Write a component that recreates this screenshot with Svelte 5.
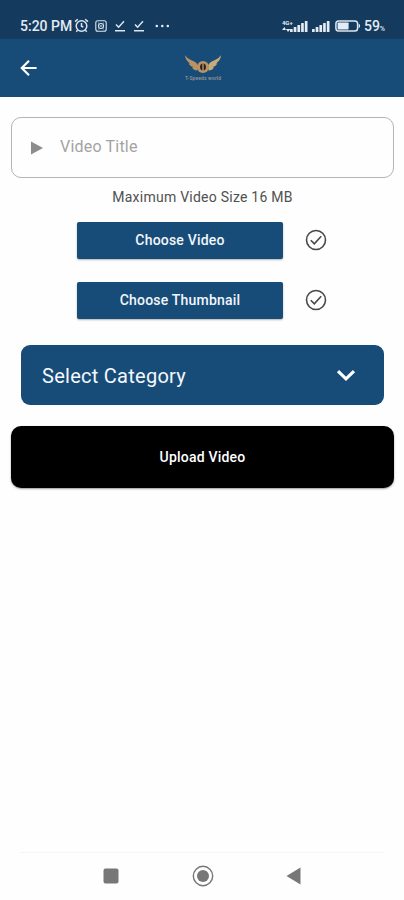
<script lang="ts">
  let title = "";

  const pickers = ["Choose Video", "Choose Thumbnail"];
  const bars = [3, 5, 7, 9, 11];
</script>

<div class="screen">
  <div class="status">
    <span class="time">5:20 PM</span>
    <svg class="alarm" width="15" height="15" viewBox="0 0 15 15">
      <circle cx="7.5" cy="8" r="5.3" />
      <path d="M7.5 5v3.2l1.8 1M1 3.6 3.8 1.2M14 3.6l-2.8-2.4M3.5 12.3 2.3 13.7M11.5 12.3l1.2 1.4" />
    </svg>
    <svg class="camera" width="12" height="12" viewBox="0 0 12 12">
      <rect x="0.8" y="0.8" width="10.4" height="10.4" rx="2" />
      <circle cx="6" cy="6" r="2.5" />
      <path d="M3 3h.7M8.4 3H9M6 5v2M3 9h.7M8.4 9H9" />
    </svg>
    {#each [0, 1] as tick (tick)}
      <svg class="tick" width="12" height="12" viewBox="0 0 12 12">
        <path d="M2 4.5 4.6 7.2 10 1.2M1 10.8h10" />
      </svg>
    {/each}
    <svg class="dots" width="15" height="4" viewBox="0 0 15 4">
      <circle cx="1.8" cy="2" r="1.3" />
      <circle cx="7.3" cy="2" r="1.3" />
      <circle cx="12.8" cy="2" r="1.3" />
    </svg>

    <div class="right">
      <div class="network">
        <span>4G+</span>
        <svg width="9" height="5" viewBox="0 0 9 5">
          <path d="M0 3 2.5 0 4 3zM4 2h4.5L6 5z" />
        </svg>
      </div>
      {#each [0, 1] as sim (sim)}
        <svg class="signal" width="18" height="12" viewBox="0 0 18 12">
          {#each bars as h, i}
            <rect x={i * 3.7} y={12 - h} width="2.7" height={h} rx="0.5" />
          {/each}
        </svg>
      {/each}
      <svg class="battery" width="26" height="12" viewBox="0 0 26 12">
        <rect class="shell" x="0.9" y="0.9" width="21.7" height="10.2" rx="2.8" />
        <rect x="2.6" y="2.4" width="11" height="7.2" rx="0.8" />
        <path d="M23.7 3.8c1.8.6 1.8 3.8 0 4.4z" />
      </svg>
      <span class="percent">59<small>%</small></span>
    </div>
  </div>

  <header>
    <button class="back" aria-label="Back">
      <svg width="18" height="18" viewBox="0 0 18 18">
        <path d="M16.6 9H2.2M9 1.8 1.8 9 9 16.2" />
      </svg>
    </button>
    <svg class="logo" width="38" height="28" viewBox="0 0 38 28">
      <path class="wing" d="M1 1c2 4 7 5 10 7 2 1 3 3 3 5l-.5 3.500C11 16.500 9 15.500 8 13.500l1.500-.5C7 12.500 5.500 11 4.500 9.500H6C3 7.500 1 4.500 1 1z" />
      <path class="wing light" d="M37 1c-2 4-7 5-10 7-2 1-3 3-3 5l.5 3.500c2.500 0 4.500-1 5.500-3l-1.500-.5c2.500-.5 4-2 5-3.500H32c3-2 5-5 5-8.500z" />
      <circle class="wing" cx="19" cy="13" r="6" />
      <path class="dark" d="M18.300 9.500c-3 .5-3 6.500 0 7zM19.700 9.500c3 .5 3 6.500 0 7z" />
      <text x="1" y="25.500" textLength="36">T-Speeds world</text>
    </svg>
  </header>

  <main>
    <label class="field">
      <svg width="13" height="14" viewBox="0 0 13 14">
        <path d="M0 0.500 12 7 0 13.500z" />
      </svg>
      <input type="text" placeholder="Video Title" bind:value={title} />
    </label>

    <p class="hint">Maximum Video Size 16 MB</p>

    <div class="pickers">
      {#each pickers as label (label)}
        <div class="picker">
          <button>{label}</button>
          <svg width="22" height="22" viewBox="0 0 22 22">
            <circle cx="11" cy="11" r="9.500" />
            <path d="M5.800 11.300 9.300 14.800 16.200 7.300" />
          </svg>
        </div>
      {/each}
    </div>

    <button class="select">
      <span>Select Category</span>
      <svg width="20" height="13" viewBox="0 0 20 13">
        <path d="M2 2.200 10 9.800 18 2.200" />
      </svg>
    </button>

    <button class="upload">Upload Video</button>
  </main>

  <nav>
    <svg width="22" height="22" viewBox="0 0 22 22">
      <rect x="3.500" y="3.500" width="15" height="15" rx="2" />
    </svg>
    <svg width="22" height="22" viewBox="0 0 22 22">
      <circle class="ring" cx="11" cy="11" r="9.700" />
      <circle cx="11" cy="11" r="6" />
    </svg>
    <svg width="22" height="22" viewBox="0 0 22 22">
      <path d="M17.500 2.500v17L3.500 11z" />
    </svg>
  </nav>
</div>

<style>
  :global(body) {
    background: #fff;
  }

  .screen {
    display: flex;
    flex-direction: column;
    width: 404px;
    height: 900px;
    overflow: hidden;
    background: #fefefe;
    font-family: Roboto, "Liberation Sans", sans-serif;
  }

  svg {
    display: block;
    flex: none;
  }

  button {
    border: 0;
    padding: 0;
    font: inherit;
    cursor: pointer;
  }

  .status {
    display: flex;
    align-items: center;
    box-sizing: border-box;
    height: 39px;
    padding: 12px 19px 0 20px;
    background: #143a5e;
    color: #e3ebf4;
    fill: #e3ebf4;
  }

  .time {
    width: 54px;
    font-size: 14px;
    font-weight: 500;
    white-space: nowrap;
  }

  .alarm,
  .camera,
  .tick {
    fill: none;
    stroke: #dce6f0;
    stroke-width: 1.5;
  }

  .alarm {
    margin-right: 6px;
  }

  .camera {
    margin-right: 7px;
    stroke-width: 1.1;
  }

  .tick {
    margin-right: 7px;
  }

  .dots {
    margin-left: 3px;
  }

  .right {
    display: flex;
    align-items: center;
    margin-left: auto;
  }

  .network {
    width: 8px;
    height: 14px;
    font-size: 6px;
    font-weight: 700;
    line-height: 8px;
  }

  .network span {
    display: block;
    white-space: nowrap;
  }

  .signal {
    margin-right: 4px;
  }

  .battery {
    margin: 0 3px 0 1px;
  }

  .shell {
    fill: none;
    stroke: #dce6f0;
    stroke-width: 1.5;
  }

  .percent {
    font-size: 14px;
    font-weight: 500;
  }

  .percent small {
    font-size: 7px;
  }

  header {
    display: flex;
    align-items: center;
    box-sizing: border-box;
    height: 58px;
    padding-left: 20px;
    background: #174c79;
  }

  .back {
    background: none;
  }

  .back path {
    fill: none;
    stroke: #fff;
    stroke-width: 2.2;
  }

  .logo {
    margin-left: 146px;
  }

  .wing {
    fill: #b99265;
  }

  .light {
    fill: #c7ab78;
  }

  .dark {
    fill: #2a211e;
  }

  .logo text {
    fill: #9a9693;
    font-size: 5px;
    font-weight: 500;
  }

  main {
    display: flex;
    flex: 1;
    flex-direction: column;
    padding: 20px 10px 0 11px;
  }

  .field {
    display: flex;
    align-items: center;
    box-sizing: border-box;
    height: 61px;
    padding-left: 19px;
    border: 1px solid #b4b4b4;
    border-radius: 10px;
  }

  .field svg {
    fill: #8c8c8c;
  }

  .field input {
    width: 280px;
    margin: 0 0 2px 16px;
    border: 0;
    padding: 0;
    outline: 0;
    background: none;
    font: 16px Roboto, sans-serif;
    letter-spacing: 0.2px;
  }

  .field input::placeholder {
    color: #a3a3a3;
    opacity: 1;
  }

  .hint {
    margin: 11px 0 0;
    color: #505050;
    font-size: 14px;
    line-height: 16px;
    letter-spacing: 0.24px;
    text-align: center;
  }

  .pickers {
    display: flex;
    flex-direction: column;
    gap: 23px;
    margin: 17px 0 0 66px;
  }

  .picker {
    display: flex;
    align-items: center;
    gap: 22px;
  }

  .picker button {
    width: 206px;
    height: 37px;
    border-radius: 2px;
    padding-bottom: 1px;
    background: #174c79;
    box-shadow: 0 1px 2px rgba(0, 0, 0, 0.3);
    color: #f2f6fa;
    font-size: 14px;
    font-weight: 500;
    letter-spacing: 0.2px;
  }

  .picker svg {
    margin-bottom: 2px;
    fill: none;
    stroke: #484848;
    stroke-width: 1.6;
  }

  .select {
    display: flex;
    align-items: center;
    justify-content: space-between;
    height: 60px;
    margin: 26px 10px 0;
    padding: 1px 28px 0 21px;
    border-radius: 9px;
    background: #174c79;
    color: #f4f8fc;
    font-size: 20px;
    letter-spacing: 0.27px;
  }

  .select path {
    fill: none;
    stroke: #fff;
    stroke-width: 3.2;
  }

  .upload {
    height: 62px;
    margin-top: 21px;
    border-radius: 10px;
    background: #000;
    box-shadow: 0 1px 2px rgba(0, 0, 0, 0.4);
    color: #fff;
    font-size: 14px;
    font-weight: 500;
    letter-spacing: 0.2px;
  }

  nav {
    display: flex;
    align-items: center;
    justify-content: space-between;
    box-sizing: border-box;
    height: 48px;
    margin: 0 20px;
    padding: 0 79px 2px 80px;
    border-top: 1px solid #f5f5f5;
    fill: #777;
  }

  .ring {
    fill: none;
    stroke: #777;
    stroke-width: 1.4;
  }
</style>
